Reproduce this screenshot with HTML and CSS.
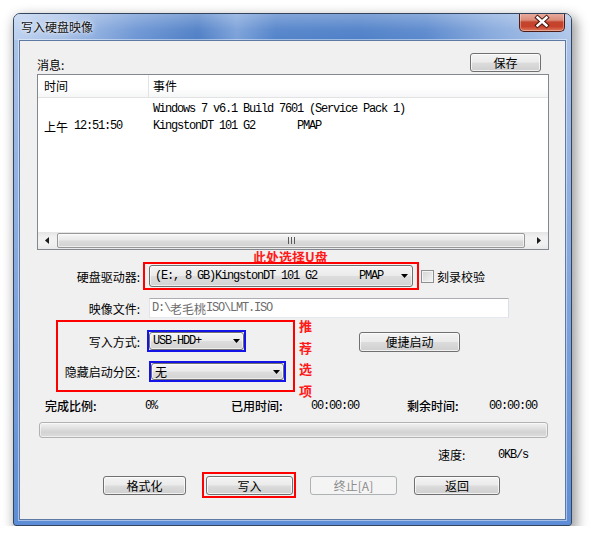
FILE: index.html
```html
<!DOCTYPE html>
<html lang="zh-CN">
<head>
<meta charset="utf-8">
<title>写入硬盘映像</title>
<link rel="stylesheet" href="styles.css">
</head>
<body>
<div class="stage">
  <div class="window">
    <div class="titlebar">
      <span class="title">写入硬盘映像</span>
      <div class="close">
        <svg width="44" height="18" viewBox="0 0 44 18">
          <path d="M17.5 4.5L26.5 12.5M26.5 4.5L17.5 12.5" stroke="#4a1810" stroke-width="4.4" stroke-linecap="square" fill="none"/>
          <path d="M17.5 4.5L26.5 12.5M26.5 4.5L17.5 12.5" stroke="#ffffff" stroke-width="2.4" stroke-linecap="square" fill="none"/>
        </svg>
      </div>
    </div>
    <div class="frame">
      <div class="client">
        <div class="row-msg">
          <span class="lbl-msg">消息:</span>
          <button class="btn btn-save">保存</button>
        </div>

        <div class="list">
          <div class="list-head">
            <div class="hcol hcol-time">时间</div>
            <div class="hcol hcol-event">事件</div>
          </div>
          <div class="list-body">
            <div class="lrow"><span class="cell-time"></span><span class="cell-event mono">Windows 7 v6.1 Build 7601 (Service Pack 1)</span></div>
            <div class="lrow"><span class="cell-time"><span class="cjk">上午</span><span class="mono"> 12:51:50</span></span><span class="cell-event mono">KingstonDT 101 G2       PMAP</span></div>
          </div>
          <div class="hscroll">
            <div class="sb-btn"><svg width="4" height="7" viewBox="0 0 4 7"><path d="M4 0V7L0 3.5Z" fill="#1a1a1a"/></svg></div>
            <div class="sb-thumb"><svg width="7" height="7" viewBox="0 0 7 7"><path d="M0.5 0V7M3.5 0V7M6.5 0V7" stroke="#5a5a5a" stroke-width="1"/></svg></div>
            <div class="sb-btn"><svg width="4" height="7" viewBox="0 0 4 7"><path d="M0 0V7L4 3.5Z" fill="#1a1a1a"/></svg></div>
          </div>
        </div>

        <div class="note-top">此处选择U盘</div>

        <div class="frow row-drive">
          <span class="flabel">硬盘驱动器:</span>
          <div class="redbox box-drive">
            <div class="combo combo-drive">
              <span class="mono">(E:, 8 GB)KingstonDT 101 G2       PMAP</span>
              <svg class="arr" width="7" height="4" viewBox="0 0 7 4"><path d="M0 0H7L3.5 4Z" fill="#000"/></svg>
            </div>
          </div>
          <span class="check"></span>
          <span class="check-label">刻录校验</span>
        </div>

        <div class="frow row-image">
          <span class="flabel">映像文件:</span>
          <div class="field"><span class="mono">D:\</span><span class="cjk">老毛桃</span><span class="mono">ISO\LMT.ISO</span></div>
        </div>

        <div class="row-options">
          <div class="redbox box-options">
            <div class="orow">
              <span class="olabel">写入方式:</span>
              <div class="bluebox blue-mode">
                <div class="combo combo-mode">
                  <span class="mono">USB-HDD+</span>
                  <svg class="arr" width="7" height="4" viewBox="0 0 7 4"><path d="M0 0H7L3.5 4Z" fill="#000"/></svg>
                </div>
              </div>
            </div>
            <div class="orow orow-2">
              <span class="olabel">隐藏启动分区:</span>
              <div class="bluebox blue-hide">
                <div class="combo combo-hide">
                  <span class="cjk">无</span>
                  <svg class="arr" width="7" height="4" viewBox="0 0 7 4"><path d="M0 0H7L3.5 4Z" fill="#000"/></svg>
                </div>
              </div>
            </div>
          </div>
          <div class="note-side"><span>推</span><span>荐</span><span>选</span><span>项</span></div>
          <button class="btn btn-quick">便捷启动</button>
        </div>

        <div class="status">
          <span class="st-label st-l1">完成比例:</span><span class="mono st-v1">0%</span>
          <span class="st-label st-l2">已用时间:</span><span class="mono st-v2">00:00:00</span>
          <span class="st-label st-l3">剩余时间:</span><span class="mono">00:00:00</span>
        </div>

        <div class="progress"></div>

        <div class="speed"><span class="sp-label">速度:</span><span class="mono">0KB/s</span></div>

        <div class="actions">
          <button class="btn btn-act btn-format">格式化</button>
          <div class="redbox box-write"><button class="btn btn-act btn-write">写入</button></div>
          <button class="btn btn-act btn-stop" disabled>终止[A]</button>
          <button class="btn btn-act btn-back">返回</button>
        </div>
      </div>
    </div>
  </div>
</div>
</body>
</html>
```

FILE: styles.css
```css
* { box-sizing: border-box; }
html, body { margin: 0; padding: 0; background: #ffffff; }
body {
  font-family: "Noto Sans CJK SC", "Liberation Sans", sans-serif;
  font-size: 12px;
  color: #000;
}

.stage { padding: 13px 0 0 13px; }

.window {
  width: 559px;
  height: 513px;
  border: 1px solid #34465f;
  border-radius: 7px 7px 3px 3px;
  background: linear-gradient(180deg, #b4c9ea 0px, #a3bde6 60px, #7ea3dc 300px, #5d8dd6 100%);
  box-shadow: 3px 5px 12px 2px rgba(0, 0, 0, 0.38);
  display: flex;
  flex-direction: column;
  overflow: hidden;
}

.titlebar {
  height: 26px;
  display: flex;
  align-items: center;
  padding: 0 6px 0 7px;
  background:
    linear-gradient(180deg, rgba(255,255,255,0.28) 0%, rgba(255,255,255,0.05) 60%, rgba(255,255,255,0) 100%),
    linear-gradient(90deg, #bdd1ef 0%, #a6bfe7 9%, #6d96d4 22%, #4f7fc6 33%, #7ba1d9 40%, #5383ca 47%, #4f80c8 62%, #5b89cd 74%, #88aadd 86%, #afc7ea 100%);
}
.title {
  font-size: 12px;
  color: #111;
  text-shadow: 0 0 6px rgba(255,255,255,0.95), 0 0 2px rgba(255,255,255,0.9);
  line-height: 14px;
}
.close {
  margin-left: auto;
  align-self: flex-start;
  margin-top: -1px;
  width: 46px;
  height: 19px;
  border: 1px solid #4f1c14;
  border-top: none;
  border-radius: 0 0 5px 5px;
  background: linear-gradient(180deg, #eab1a4 0%, #dc8a78 40%, #c2452f 50%, #c7412a 75%, #dd7a5e 100%);
  box-shadow: inset 0 0 0 1px rgba(255,255,255,0.35);
  display: flex;
  align-items: center;
  justify-content: center;
}

.frame {
  flex: 1;
  padding: 0 5px 5px 5px;
  display: flex;
}

.client {
  flex: 1;
  background: #f0f0f0;
  border: 1px solid #5e7aa3;
  box-shadow: 0 0 0 1px rgba(255,255,255,0.45);
  padding: 12px 16px 0 17px;
  display: flex;
  flex-direction: column;
}

.mono {
  font-family: "Liberation Mono", "DejaVu Sans Mono", monospace;
  font-size: 12px;
  letter-spacing: -1.2px;
  white-space: pre;
}
.cjk {
  font-family: "Noto Sans CJK SC", sans-serif;
  font-size: 12px;
  letter-spacing: 0;
}

/* buttons */
.btn {
  font-family: "Noto Sans CJK SC", "Liberation Sans", sans-serif;
  font-size: 12px;
  color: #000;
  padding: 0;
  margin: 0;
  height: 19px;
  line-height: 17px;
  border: 1px solid #707070;
  border-radius: 3px;
  background: linear-gradient(180deg, #f3f3f3 0%, #ebebeb 48%, #dcdcdc 52%, #cfcfcf 100%);
  box-shadow: inset 0 0 0 1px rgba(255,255,255,0.7);
  text-align: center;
}
.btn:disabled {
  color: #8d8d8d;
  border-color: #adb2b5;
  background: #f4f4f4;
  box-shadow: none;
}

.row-msg {
  height: 19px;
  display: flex;
  align-items: flex-end;
}
.lbl-msg { line-height: 14px; }
.btn-save { margin-left: auto; margin-right: 8px; width: 71px; }

/* list */
.list {
  margin-top: 2px;
  height: 176px;
  border: 1px solid #828790;
  background: #fff;
  display: flex;
  flex-direction: column;
}
.list-head {
  height: 23px;
  display: flex;
  border-bottom: 1px solid #e3e3e3;
  background: linear-gradient(180deg, #ffffff 0%, #ffffff 60%, #f5f6f7 100%);
}
.hcol { line-height: 22px; }
.hcol-time { width: 111px; padding-left: 6px; border-right: 1px solid #e3e3e3; }
.hcol-event { padding-left: 4px; }
.list-body { flex: 1; padding-top: 2px; }
.lrow { height: 17.5px; display: flex; align-items: center; }
.cell-time { width: 111px; padding-left: 6px; display: flex; align-items: center; }
.cell-event { padding-left: 4px; }

.hscroll {
  height: 17px;
  display: flex;
  background: linear-gradient(180deg, #e4e4e4 0%, #f1f1f1 30%, #f1f1f1 70%, #e8e8e8 100%);
}
.sb-btn { width: 18px; display: flex; align-items: center; justify-content: center; }
.sb-thumb {
  flex: 1;
  margin: 1px 5px 1px 1px;
  border: 1px solid #979797;
  border-radius: 2px;
  background: linear-gradient(180deg, #f6f6f6 0%, #e9e9e9 45%, #dadada 55%, #d2d2d2 100%);
  box-shadow: inset 0 0 0 1px rgba(255,255,255,0.6);
  display: flex;
  align-items: center;
  justify-content: center;
}

/* annotations */
.note-top {
  margin-top: 1px;
  height: 11px;
  line-height: 12px;
  margin-left: 216px;
  color: #ff1a1a;
  font-weight: bold;
  font-size: 13px;
}
.redbox { border: 2px solid #ff0000; }
.bluebox { border: 2px solid #1414e6; }

/* form rows */
.frow { display: flex; align-items: center; }
.flabel { width: 103px; text-align: right; }
.row-drive { height: 28px; }
.box-drive { margin-left: 3px; width: 276px; height: 28px; padding: 1px 4px; }
.combo {
  height: 100%;
  border: 1px solid #707070;
  border-radius: 3px;
  background: linear-gradient(180deg, #f4f4f4 0%, #ebebeb 48%, #dddddd 52%, #d3d3d3 100%);
  box-shadow: inset 0 0 0 1px rgba(255,255,255,0.6);
  display: flex;
  align-items: center;
  justify-content: space-between;
  padding: 0 4px 0 5px;
}
.check {
  margin-left: 2px;
  width: 13px;
  height: 13px;
  border: 1px solid #8e8f8f;
  background: linear-gradient(135deg, #d4d4d4 0%, #f6f6f6 100%);
  box-shadow: inset 0 0 0 1px #f4f4f4;
}
.check-label { margin-left: 3px; }

.row-image { margin-top: 8px; height: 20px; }
.field {
  margin-left: 9px;
  width: 360px;
  height: 20px;
  border: 1px solid;
  border-color: #abadb3 #dbdfe6 #e3e9ef #e2e3ea;
  background: #fff;
  color: #6d6d6d;
  padding-left: 2px;
  display: flex;
  align-items: center;
}
.field .cjk { color: #6d6d6d; }

.row-options {
  margin-top: 2px;
  height: 72px;
  display: flex;
  align-items: flex-start;
}
.box-options {
  margin-left: 19px;
  width: 239px;
  height: 72px;
  padding-top: 8px;
}
.orow { display: flex; align-items: center; }
.olabel { width: 82px; text-align: right; }
.blue-mode { margin-left: 7px; width: 99px; height: 22px; }
.orow-2 { margin-top: 9px; }
.blue-hide { margin-left: 9px; width: 137px; height: 21px; }
.combo-mode, .combo-hide { padding-left: 3px; padding-right: 3px; }

.note-side {
  margin-left: 4px;
  margin-top: -5px;
  width: 13px;
  display: flex;
  flex-direction: column;
  color: #ff1a1a;
  font-weight: bold;
  font-size: 13px;
  line-height: 21.5px;
}
.btn-quick { margin-left: 47px; margin-top: 12px; width: 101px; height: 20px; line-height: 18px; }

/* status */
.status { margin-top: 7px; height: 14px; display: flex; align-items: center; line-height: 14px; }
.st-label { font-weight: 500; }
.st-l1 { margin-left: 8px; width: 100px; }
.st-v1 { width: 86px; }
.st-l2 { width: 80px; }
.st-v2 { width: 96px; }
.st-l3 { width: 82px; }

.progress {
  margin-top: 9px;
  margin-left: 2px;
  width: 509px;
  height: 16px;
  border: 1px solid #b2b2b2;
  border-radius: 3px;
  background: linear-gradient(180deg, #f2f2f2 0%, #e2e2e2 35%, #d3d3d3 65%, #dcdcdc 100%);
  box-shadow: inset 0 0 0 1px rgba(255,255,255,0.55);
}

.speed { margin-top: 10px; height: 14px; display: flex; align-items: center; line-height: 14px; }
.sp-label { margin-left: 401px; width: 60px; }

.actions { margin-top: 10px; height: 26px; display: flex; align-items: center; }
.btn-format { margin-left: 66px; width: 83px; }
.box-write { margin-left: 16px; width: 94px; height: 26px; padding: 2px 1px 1px 2px; }
.btn-write { width: 87px; }
.btn-stop { margin-left: 14px; width: 87px; }
.btn-back { margin-left: 17px; width: 86px; }
```
